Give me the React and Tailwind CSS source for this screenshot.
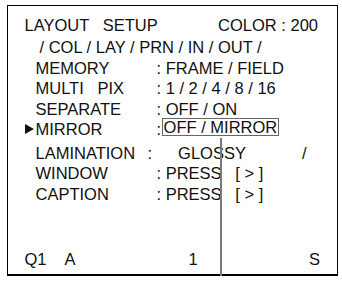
import React from 'react';

const rows = [
  { label: 'MEMORY', value: ': FRAME / FIELD', h: 'h-[20px]' },
  { label: 'MULTI   PIX', value: ': 1 / 2 / 4 / 8 / 16', h: 'h-[21px]' },
  { label: 'SEPARATE', value: ': OFF / ON', h: 'h-[20px]' },
];

const App = () => {
  return (
    <div
      className="relative w-[342px] h-[281px] bg-white text-[#111] text-[16.5px] leading-[20px]"
      style={{ fontFamily: '"Liberation Sans", Arial, sans-serif' }}
    >
      <div className="absolute left-[7px] top-[5px] w-[331px] h-[271px] border-t border-l-[1.5px] border-r-[1.5px] border-b-2 border-black">
        <div className="pt-[9px] pl-[16.5px] whitespace-pre">
          {/* Header */}
          <div className="flex h-[22px]">
            <span>LAYOUT   SETUP</span>
            <span className="ml-auto mr-[19px]">COLOR : 200</span>
          </div>
          <div className="h-[21px] pl-[15px]">/ COL / LAY / PRN / IN / OUT /</div>

          {rows.map((r) => (
            <div key={r.label} className={`flex ${r.h}`}>
              <span className="w-[11px]" />
              <span className="w-[121px]">{r.label}</span>
              <span>{r.value}</span>
            </div>
          ))}

          {/* Selected row */}
          <div className="flex h-[24px]">
            <span className="w-[11px] flex items-center h-[20px]">
              <svg width="9" height="10" viewBox="0 0 9 10">
                <path d="M0 0 L9 5 L0 10 Z" fill="#111" />
              </svg>
            </span>
            <span className="w-[121px]">MIRROR</span>
            <span>:</span>
            <span className="ml-[1px] -mt-[1px] h-[18px] leading-[16px] border-[1.5px] border-[#666] pl-[0.5px] pr-[1px]">OFF / MIRROR</span>
          </div>

          <div className="flex h-[20px]">
            <span className="w-[11px]" />
            <span className="w-[112px]">LAMINATION</span>
            <span>:</span>
            <span className="ml-[26px]">GLOSSY</span>
            <span className="ml-[56px]">/</span>
          </div>
          <div className="flex h-[21px]">
            <span className="w-[11px]" />
            <span className="w-[121px]">WINDOW</span>
            <span>: PRESS   [ &gt; ]</span>
          </div>
          <div className="flex h-[20px]">
            <span className="w-[11px]" />
            <span className="w-[121px]">CAPTION</span>
            <span>: PRESS   [ &gt; ]</span>
          </div>

          <div className="flex mt-[45px] h-[20px]">
            <span className="w-[40px]">Q1</span>
            <span className="w-[124px]">A</span>
            <span>1</span>
            <span className="ml-auto mr-[17px]">S</span>
          </div>
        </div>
      </div>

      {/* cursor line */}
      <div className="absolute left-[220px] top-[138px] w-[2px] h-[138px] bg-[#7a7a7a]" />
    </div>
  );
};

export default App;
